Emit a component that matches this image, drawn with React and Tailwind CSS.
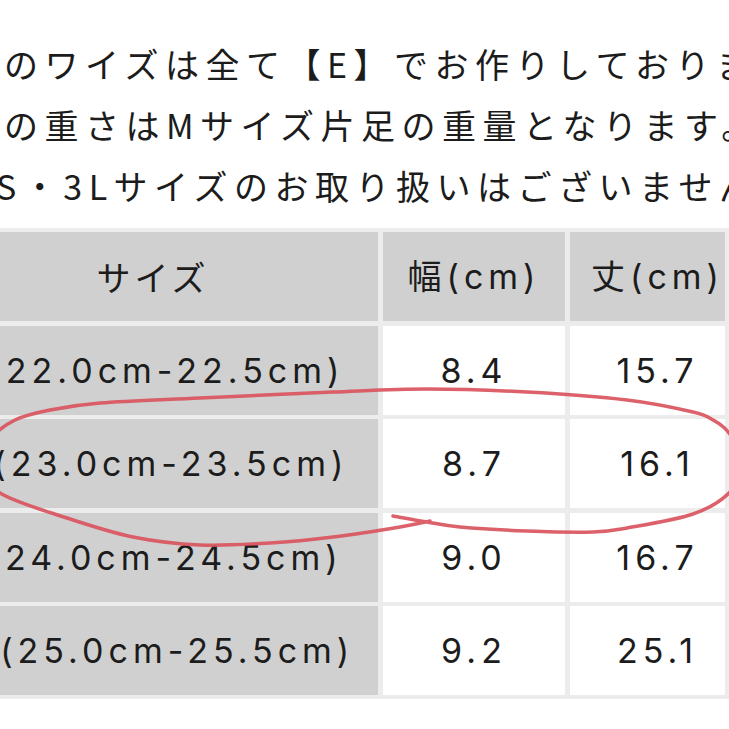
import React from "react";

const rows = [
  { size: "S(22.0cm-22.5cm)", w: "8.4", l: "15.7" },
  { size: "M(23.0cm-23.5cm)", w: "8.7", l: "16.1" },
  { size: "L(24.0cm-24.5cm)", w: "9.0", l: "16.7" },
  { size: "LL(25.0cm-25.5cm)", w: "9.2", l: "25.1" },
];

const pts = [
  [393, 516], [427, 522], [460, 527], [527, 531], [593, 532], [627, 528],
  [693, 514], [729, 493], [745, 463], [729, 433], [713, 420], [693, 412],
  [627, 400], [527, 392], [427, 389], [333, 392], [200, 398], [100, 403],
  [50, 410], [15, 420], [-10, 440], [-15, 465], [0, 493], [67, 518],
  [133, 537], [200, 545], [270, 543], [333, 537], [400, 527], [430, 521],
];

function smoothPath(p) {
  let d = `M ${p[0][0]} ${p[0][1]}`;
  for (let i = 0; i < p.length - 1; i++) {
    const p0 = p[i - 1] || p[i];
    const p1 = p[i];
    const p2 = p[i + 1];
    const p3 = p[i + 2] || p2;
    const c1 = [p1[0] + (p2[0] - p0[0]) / 6, p1[1] + (p2[1] - p0[1]) / 6];
    const c2 = [p2[0] - (p3[0] - p1[0]) / 6, p2[1] - (p3[1] - p1[1]) / 6];
    d += ` C ${c1[0]} ${c1[1]}, ${c2[0]} ${c2[1]}, ${p2[0]} ${p2[1]}`;
  }
  return d;
}

const jp = "font-['Noto_Sans_CJK_JP',sans-serif]";
const num = "font-['Inter','Noto_Sans_CJK_JP',sans-serif]";

export default function App() {
  return (
    <div className="relative w-[729px] h-[729px] overflow-hidden bg-white text-[#1c1c1c]">
      <div className={`${jp} pt-[33px] text-[34px] leading-[61px] tracking-[6.5px] whitespace-nowrap`}>
        <div className="ml-[4px]">のワイズは全て【E】でお作りしております。</div>
        <div className="ml-[4px]">の重さはMサイズ片足の重量となります。</div>
        <div className="ml-[-4px]">S・3Lサイズのお取り扱いはございません。</div>
      </div>

      <div className="mt-[12px] ml-[-76px] w-[805px] bg-[#ececec] p-[4px] flex flex-col gap-[4.5px]">
        <div className="flex gap-[5px] h-[89px]">
          <div className={`${jp} w-[450px] bg-[#d0d0d0] flex items-center justify-center text-[34px] tracking-[4px]`}>サイズ</div>
          <div className={`${num} w-[182px] bg-[#d0d0d0] flex items-center justify-center text-[34px] tracking-[5px]`}>幅(cm)</div>
          <div className={`${num} w-[155px] bg-[#d0d0d0] flex items-center justify-center pl-[20px] text-[34px] tracking-[5px] whitespace-nowrap`}>丈(cm)</div>
        </div>
        {rows.map((r) => (
          <div key={r.size} className={`${num} flex gap-[5px] h-[89px] text-[34px] tracking-[5px]`}>
            <div className="w-[450px] bg-[#d0d0d0] flex items-center justify-center whitespace-nowrap">{r.size}</div>
            <div className="w-[182px] bg-white flex items-center justify-center">{r.w}</div>
            <div className="w-[155px] bg-white flex items-center justify-center pl-[20px]">{r.l}</div>
          </div>
        ))}
      </div>

      <svg className="absolute inset-0 pointer-events-none" width="729" height="729" viewBox="0 0 729 729">
        <path d={smoothPath(pts)} fill="none" stroke="#d9545d" strokeWidth="3.5" strokeLinecap="round" strokeLinejoin="round" opacity="0.92" />
      </svg>
    </div>
  );
}
